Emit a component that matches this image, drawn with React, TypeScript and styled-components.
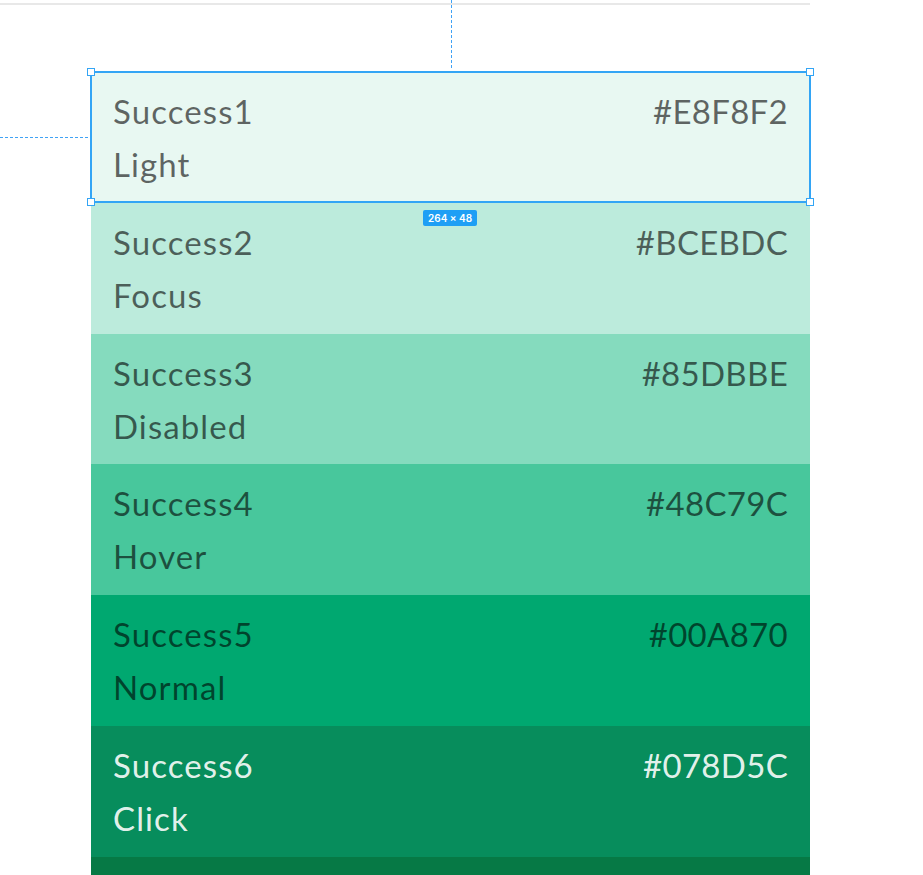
import React from "react";
import styled, { createGlobalStyle } from "styled-components";

const Global = createGlobalStyle`
  html, body { margin: 0; padding: 0; background: #ffffff; }
  body { font-family: "Lato", "Open Sans", sans-serif; }
`;

const Canvas = styled.div`
  position: relative;
  width: 923px;
  height: 875px;
  overflow: hidden;
  background: #ffffff;
  padding-top: 3px;
  box-sizing: border-box;
  display: flex;
  flex-direction: column;
  gap: 67px;
`;

const TopRule = styled.div`
  width: 810px;
  height: 2px;
  flex: none;
  background: #e8e8e8;
`;

const SwatchList = styled.div`
  padding-left: 91px;
  width: 719px;
  display: flex;
  flex-direction: column;
`;

const Swatch = styled.div<{ $bg: string; $fg: string }>`
  height: 130.8px;
  flex: none;
  box-sizing: border-box;
  padding: 13px 22px 0 22px;
  background: ${(p) => p.$bg};
  color: ${(p) => p.$fg};
  font-size: 33px;
  letter-spacing: 1.1px;
  line-height: 53px;
  display: grid;
  grid-template-columns: 1fr auto;
  align-content: start;
`;

const Name = styled.span``;
const Hex = styled.span`
  text-align: right;
  letter-spacing: 0.3px;
`;
const Usage = styled.span`
  grid-column: 1 / 3;
`;

const VGuide = styled.div`
  position: absolute;
  left: 451px;
  top: 0;
  width: 1px;
  height: 70px;
  background: repeating-linear-gradient(to bottom, #3fa2f5 0 3px, transparent 3px 5px);
`;

const HGuide = styled.div`
  position: absolute;
  left: 0;
  top: 137px;
  width: 89px;
  height: 1px;
  background: repeating-linear-gradient(to right, #3fa2f5 0 3px, transparent 3px 5px);
`;

const Selection = styled.div`
  position: absolute;
  left: 90px;
  top: 71px;
  width: 721px;
  height: 132px;
  box-sizing: border-box;
  border: 2px solid #33a5f5;
`;

const Handle = styled.div<{ $x: "l" | "r"; $y: "t" | "b" }>`
  position: absolute;
  width: 8px;
  height: 8px;
  box-sizing: border-box;
  background: #ffffff;
  border: 1px solid #33a5f5;
  ${(p) => (p.$x === "l" ? "left: -5px;" : "right: -5px;")}
  ${(p) => (p.$y === "t" ? "top: -5px;" : "bottom: -5px;")}
`;

const Badge = styled.div`
  position: absolute;
  left: 423px;
  top: 210px;
  height: 16px;
  padding: 0 5px;
  border-radius: 2px;
  background: #1e9ff5;
  color: #ffffff;
  font-family: "Inter", "Liberation Sans", sans-serif;
  font-size: 10px;
  font-weight: 600;
  line-height: 16px;
  white-space: nowrap;
`;

const swatches = [
  { name: "Success1", hex: "#E8F8F2", usage: "Light", bg: "#E8F8F2", fg: "rgba(0,0,0,0.6)" },
  { name: "Success2", hex: "#BCEBDC", usage: "Focus", bg: "#BCEBDC", fg: "rgba(0,0,0,0.6)" },
  { name: "Success3", hex: "#85DBBE", usage: "Disabled", bg: "#85DBBE", fg: "rgba(0,0,0,0.6)" },
  { name: "Success4", hex: "#48C79C", usage: "Hover", bg: "#48C79C", fg: "rgba(0,0,0,0.6)" },
  { name: "Success5", hex: "#00A870", usage: "Normal", bg: "#00A870", fg: "rgba(0,0,0,0.6)" },
  { name: "Success6", hex: "#078D5C", usage: "Click", bg: "#078D5C", fg: "rgba(255,255,255,0.9)" },
  { name: "", hex: "", usage: "", bg: "#067945", fg: "rgba(255,255,255,0.9)" },
];

export default function App() {
  return (
    <>
      <Global />
      <Canvas>
        <TopRule />
        <SwatchList>
          {swatches.map((s, i) => (
            <Swatch key={i} $bg={s.bg} $fg={s.fg}>
              <Name>{s.name}</Name>
              <Hex>{s.hex}</Hex>
              <Usage>{s.usage}</Usage>
            </Swatch>
          ))}
        </SwatchList>
        <VGuide />
        <HGuide />
        <Selection>
          <Handle $x="l" $y="t" />
          <Handle $x="r" $y="t" />
          <Handle $x="l" $y="b" />
          <Handle $x="r" $y="b" />
        </Selection>
        <Badge>264 × 48</Badge>
      </Canvas>
    </>
  );
}
